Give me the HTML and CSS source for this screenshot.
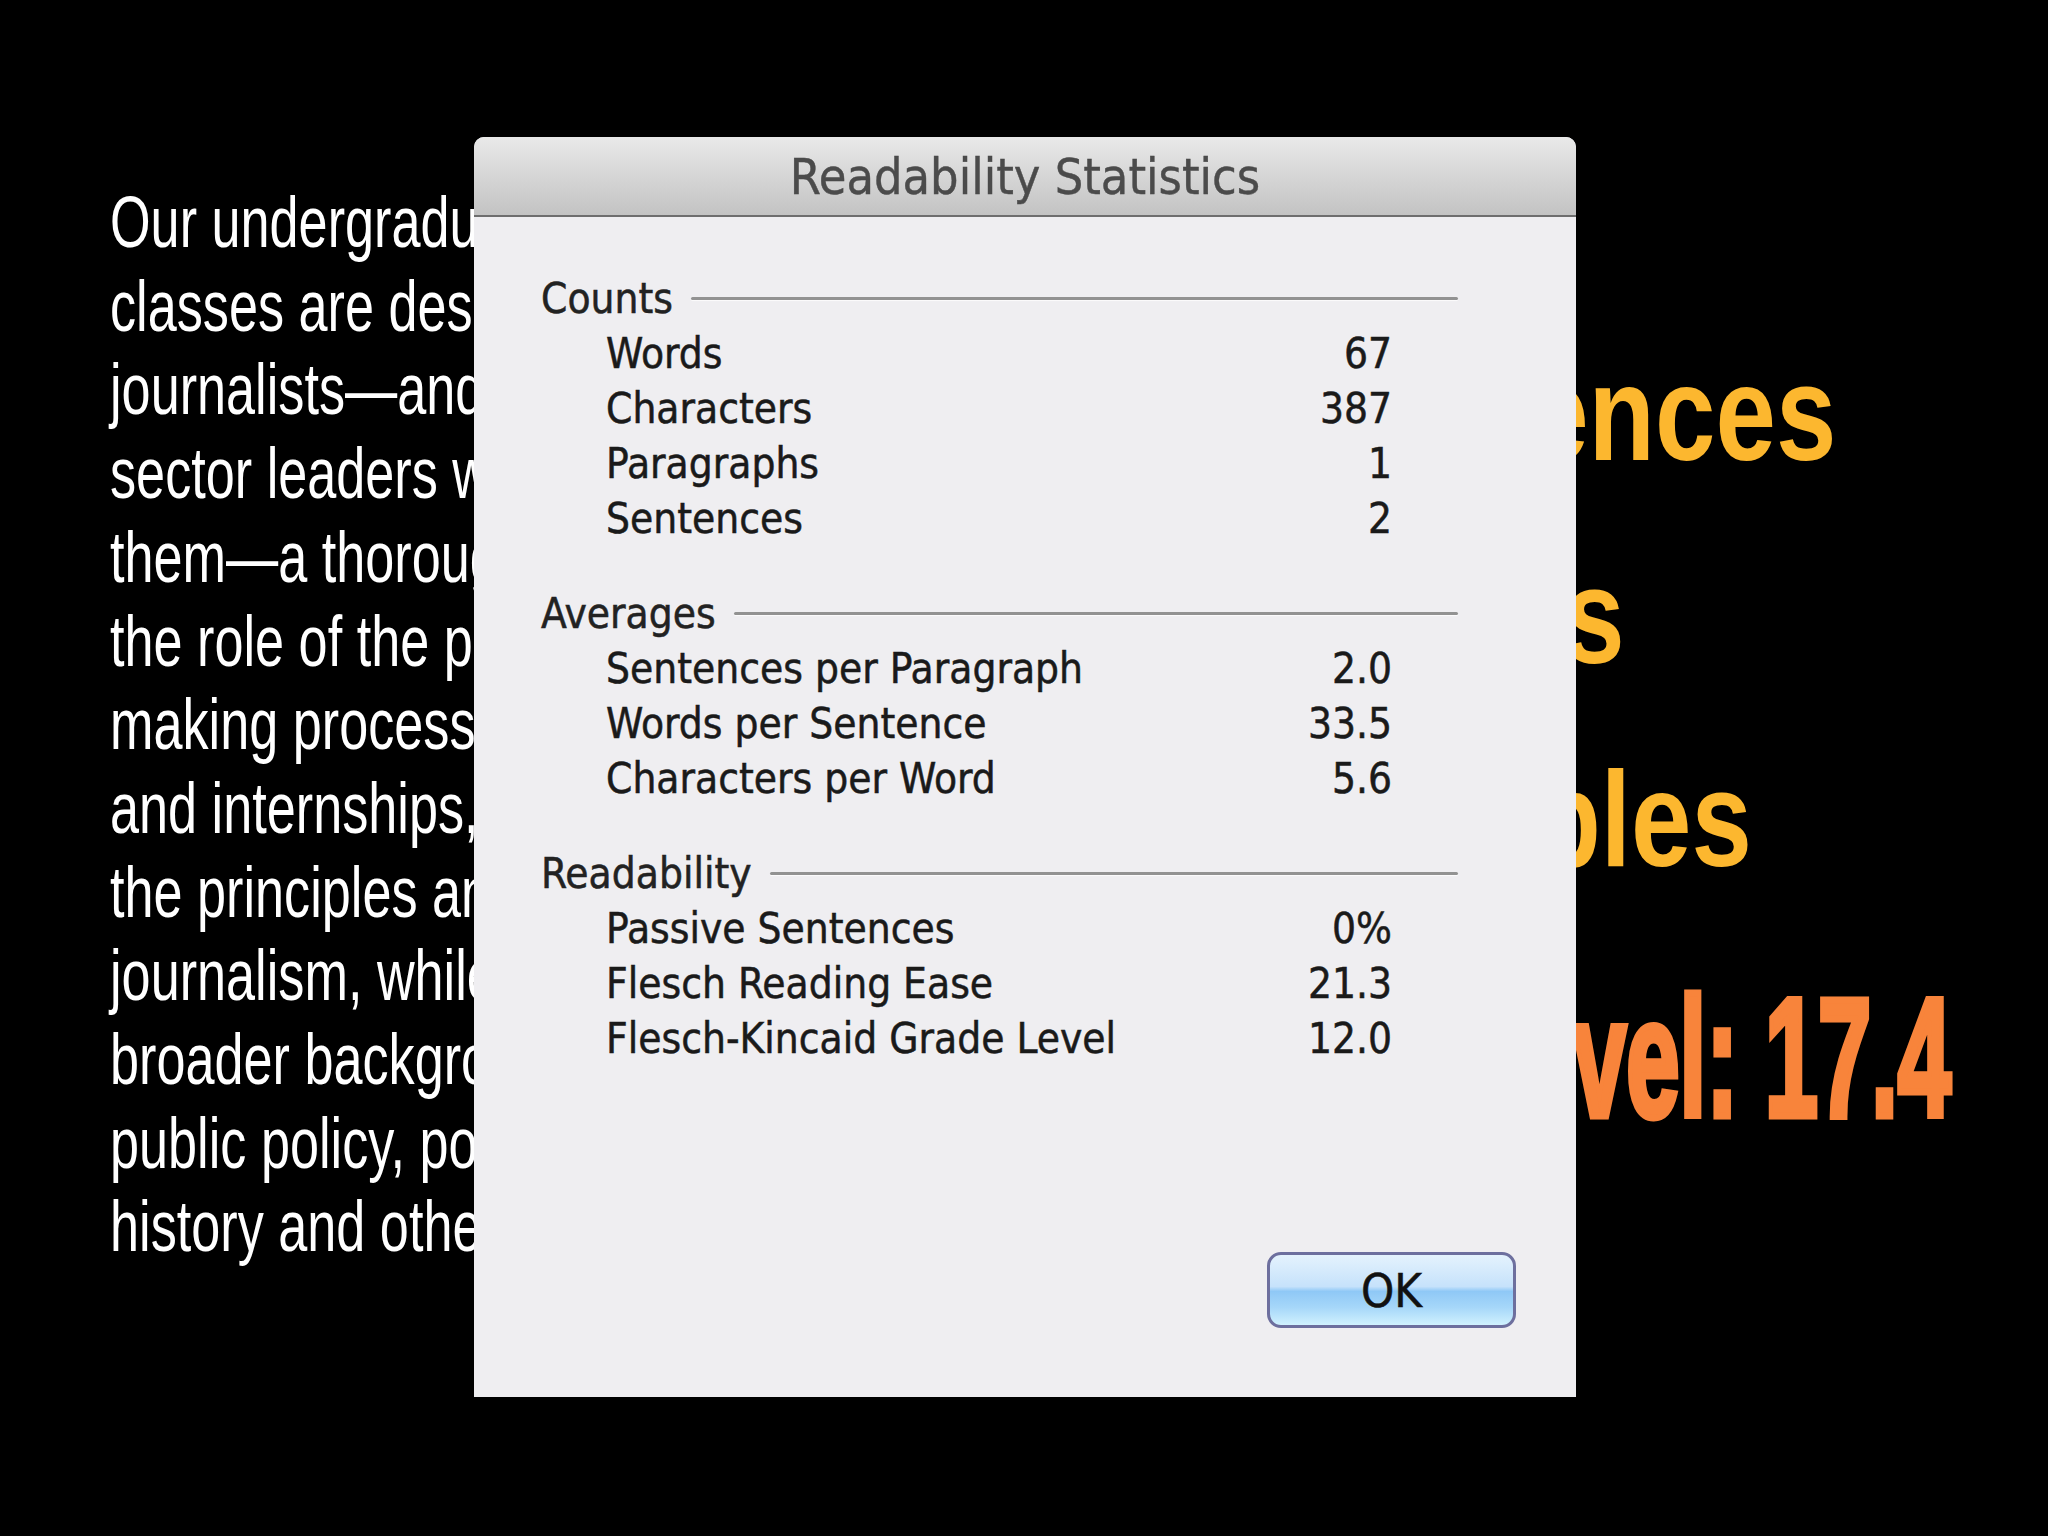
FILE: index.html
```html
<!DOCTYPE html>
<html lang="en">
<head>
    <meta charset="UTF-8">
    <title>Readability</title>
    <link rel="stylesheet" href="styles.css">
</head>
<body>
    <main class="slide">
        <div class="passage">
            <span class="line">Our undergraduate journalism</span>
            <span class="line">classes are designed to give</span>
            <span class="line">journalists—and the public</span>
            <span class="line">sector leaders who work with</span>
            <span class="line">them—a thorough grounding in</span>
            <span class="line">the role of the press in the policy-</span>
            <span class="line">making process. Through classes</span>
            <span class="line">and internships, students learn</span>
            <span class="line">the principles and practice of</span>
            <span class="line">journalism, while acquiring a</span>
            <span class="line">broader background in economics,</span>
            <span class="line">public policy, political science,</span>
            <span class="line">history and other disciplines.</span>
        </div>
        <div class="stats">
            <span class="line">Long sentences</span>
            <span class="line">Long words</span>
            <span class="line">Most syllables</span>
            <span class="line grade">Our grade level: 17.4</span>
        </div>
    </main>

    <div class="dialog">
        <div class="titlebar">Readability Statistics</div>
        <div class="dialog-body">
            <section class="group">
                <div class="group-head">Counts</div>
                <div class="row"><span>Words</span><span>67</span></div>
                <div class="row"><span>Characters</span><span>387</span></div>
                <div class="row"><span>Paragraphs</span><span>1</span></div>
                <div class="row"><span>Sentences</span><span>2</span></div>
            </section>
            <section class="group">
                <div class="group-head">Averages</div>
                <div class="row"><span>Sentences per Paragraph</span><span>2.0</span></div>
                <div class="row"><span>Words per Sentence</span><span>33.5</span></div>
                <div class="row"><span>Characters per Word</span><span>5.6</span></div>
            </section>
            <section class="group">
                <div class="group-head">Readability</div>
                <div class="row"><span>Passive Sentences</span><span>0%</span></div>
                <div class="row"><span>Flesch Reading Ease</span><span>21.3</span></div>
                <div class="row"><span>Flesch-Kincaid Grade Level</span><span>12.0</span></div>
            </section>
            <div class="actions">
                <button class="ok" type="button">OK</button>
            </div>
        </div>
    </div>
</body>
</html>
```

FILE: styles.css
```css
* {
    box-sizing: border-box;
}
html, body {
    margin: 0;
}
body {
    position: relative;
    width: 2048px;
    height: 1536px;
    overflow: hidden;
    background-color: #000;
    font-family: "Liberation Sans", Arial, sans-serif;
}

/* slide behind the dialog */
.slide {
    display: flex;
    align-items: flex-start;
    height: 100%;
}
.passage {
    flex: none;
    width: 1009px;
    overflow: hidden;
    padding: 181px 0 0 110px;
    color: #fff;
    font-size: 72px;
    line-height: 83.7px;
}
.passage .line,
.stats .line {
    display: block;
    white-space: nowrap;
    transform-origin: left center;
}
.passage .line {
    transform: scaleX(0.725);
}
.stats {
    flex: 1;
    min-width: 0;
    overflow: hidden;
    padding-top: 312px;
    font-weight: bold;
}
.stats .line {
    font-size: 135px;
    line-height: 203px;
    color: #fcb72f;
    transform: scaleX(0.805);
}
.stats .grade {
    margin-top: 41px;
    font-size: 168px;
    line-height: 193px;
    color: #f8843b;
    -webkit-text-stroke: 7px #f8843b;
    transform: scaleX(0.57);
}

/* word-processor sheet */
.dialog {
    position: absolute;
    left: 474px;
    top: 137px;
    width: 1102px;
    height: 1260px;
    display: flex;
    flex-direction: column;
    background-color: #efeef1;
    border-radius: 10px 10px 0 0;
    font-family: "DejaVu Sans Condensed", "DejaVu Sans", sans-serif;
    font-stretch: condensed;
    color: #1a1a1a;
}
.titlebar {
    flex: none;
    height: 80px;
    background: linear-gradient(#e9e9e9, #c3c3c3);
    border-bottom: 2px solid #6e6e6e;
    border-radius: 10px 10px 0 0;
    text-align: center;
    font-size: 50px;
    line-height: 80px;
    color: #4b4b4b;
    -webkit-text-stroke: 0.4px #4b4b4b;
}
.dialog-body {
    flex: 1;
    display: flex;
    flex-direction: column;
    padding: 54px 60px 69px 67px;
}
.group {
    margin-right: 58px;
}
.group + .group {
    margin-top: 40px;
}
.group-head {
    display: flex;
    align-items: center;
    gap: 18px;
    height: 55px;
    font-size: 42px;
    color: #222;
    -webkit-text-stroke: 0.5px #222;
}
.group-head::after {
    content: "";
    flex: 1;
    height: 3px;
    background-color: #929292;
    border-radius: 2px;
    box-shadow: 0 1px 1px rgba(255, 255, 255, 0.8);
}
.row {
    display: flex;
    justify-content: space-between;
    height: 55px;
    line-height: 55px;
    padding: 0 66px 0 65px;
    font-size: 42px;
    -webkit-text-stroke: 0.5px #1a1a1a;
}
.actions {
    margin-top: auto;
    display: flex;
    justify-content: flex-end;
}
.ok {
    width: 249px;
    height: 76px;
    padding: 0;
    border: 3px solid #6d6f9e;
    border-radius: 14px;
    background: linear-gradient(#e4f2fd 0%, #c6e2fb 45%, #8fc8f6 52%, #a6d7f9 75%, #d0f1fe 100%);
    font-family: inherit;
    font-stretch: condensed;
    font-size: 47px;
    color: #111;
    -webkit-text-stroke: 0.5px #111;
}
```
